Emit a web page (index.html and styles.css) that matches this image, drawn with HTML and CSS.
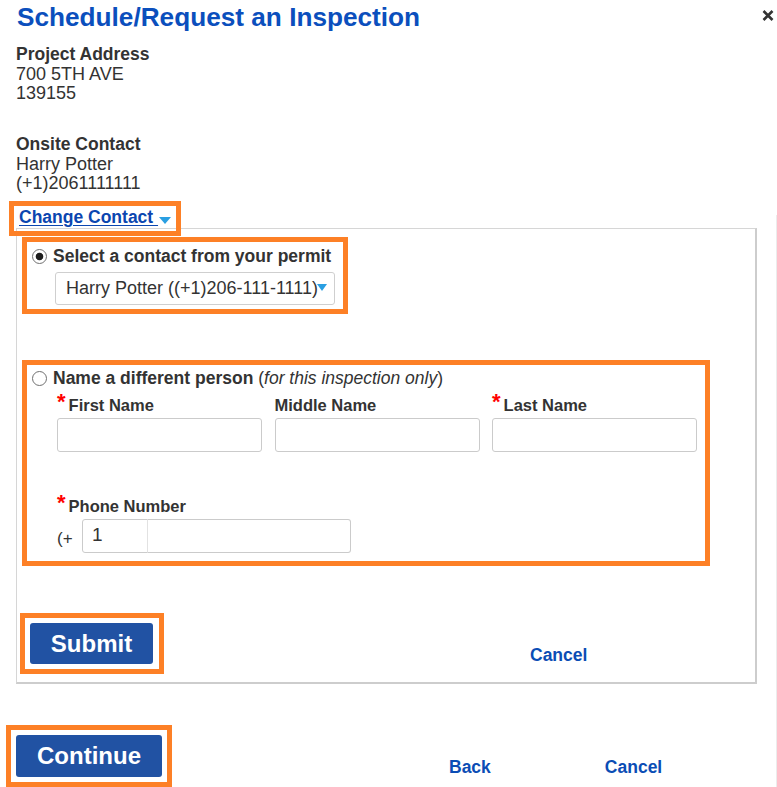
FILE: index.html
```html
<!DOCTYPE html>
<html lang="en">
<head>
<meta charset="utf-8">
<title>Schedule/Request an Inspection</title>
<link rel="stylesheet" href="styles.css">
</head>
<body>
<div class="dialog">
  <button class="close" type="button" aria-label="Close">
    <svg width="12" height="11" viewBox="0 0 12 11"><path d="M1.5 1 L10.5 10 M10.5 1 L1.5 10" stroke="#333" stroke-width="2.6" stroke-linecap="butt" fill="none"/></svg>
  </button>
  <h1 class="title">Schedule/Request an Inspection</h1>

  <div class="info">
    <div class="info-label">Project Address</div>
    <div>700 5TH AVE</div>
    <div>139155</div>
  </div>

  <div class="info onsite">
    <div class="info-label">Onsite Contact</div>
    <div>Harry Potter</div>
    <div>(+1)2061111111</div>
  </div>

  <div class="hl change-box">
    <a class="change-link" href="#">Change Contact&nbsp;</a><span class="tri"></span>
  </div>

  <div class="panel">
    <div class="hl opt1">
      <label class="radio-row">
        <input type="radio" name="contact" class="radio" checked>
        <span class="opt-text">Select a contact from your permit</span>
      </label>
      <div class="select">
        <span class="select-text">Harry Potter ((+1)206-111-1111)</span>
        <span class="select-tri"></span>
      </div>
    </div>

    <div class="hl opt2">
      <label class="radio-row">
        <input type="radio" name="contact" class="radio">
        <span class="opt-text">Name a different person</span><span class="opt-note">&nbsp;(<em>for this inspection only</em>)</span>
      </label>
      <div class="name-grid">
        <div class="field">
          <div class="field-label"><span class="req">*</span>First Name</div>
          <div class="input"></div>
        </div>
        <div class="field">
          <div class="field-label">Middle Name</div>
          <div class="input"></div>
        </div>
        <div class="field">
          <div class="field-label"><span class="req">*</span>Last Name</div>
          <div class="input"></div>
        </div>
      </div>
      <div class="phone">
        <div class="field-label"><span class="req">*</span>Phone Number</div>
        <div class="phone-row">
          <span class="plus">(+</span>
          <div class="input code">1</div>
          <div class="input number"></div>
        </div>
      </div>
    </div>

    <div class="actions">
      <div class="hl submit-box"><button class="btn submit" type="button">Submit</button></div>
      <a class="link panel-cancel" href="#">Cancel</a>
    </div>
  </div>

  <div class="footer">
    <div class="hl cont-box"><button class="btn cont" type="button">Continue</button></div>
    <a class="link back" href="#">Back</a>
    <a class="link foot-cancel" href="#">Cancel</a>
  </div>
</div>
</body>
</html>
```

FILE: styles.css
```css
html, body {
  margin: 0;
  padding: 0;
  background: #fff;
  overflow: hidden;
}

body {
  font-family: "Liberation Sans", Arial, sans-serif;
  color: #333;
  font-size: 18px;
}

.dialog {
  position: relative;
  width: 777px;
  height: 787px;
  padding-top: 2px;
  box-sizing: border-box;
}

.dialog::after {
  content: "";
  position: absolute;
  left: 776px;
  top: 215px;
  bottom: 0;
  width: 1px;
  background: #ececec;
}

.close {
  position: absolute;
  left: 762px;
  top: 10px;
  width: 12px;
  height: 11px;
  padding: 0;
  margin: 0;
  border: 0;
  background: none;
  line-height: 0;
}

.title {
  margin: 0 0 0 17px;
  font-size: 26.2px;
  line-height: 30px;
  font-weight: bold;
  color: #0b4fbd;
}

.info {
  margin: 13px 0 0 16px;
  line-height: 19.5px;
}

.info.onsite {
  margin-top: 31.75px;
}

.info-label {
  font-weight: bold;
  font-size: 17.5px;
}

.hl {
  border: 5px solid #fd8026;
  box-sizing: border-box;
}

.change-box {
  position: relative;
  z-index: 1;
  width: 172px;
  height: 35px;
  margin: 7.25px 0 0 9px;
  padding: 0 0 0 5px;
  line-height: 23px;
  font-size: 17.5px;
  background: transparent;
}

.change-link {
  color: #0b46b0;
  font-weight: bold;
  text-decoration: underline;
  text-underline-offset: 2px;
}

.tri {
  display: inline-block;
  width: 0;
  height: 0;
  margin-left: 1px;
  border-left: 6px solid transparent;
  border-right: 6px solid transparent;
  border-top: 7px solid #2a9fe2;
  vertical-align: -1px;
}

.panel {
  width: 741px;
  box-sizing: border-box;
  margin: -8px 0 0 16px;
  border-top: 1px solid #d6d6d6;
  border-left: 1px solid #d6d6d6;
  border-right: 2px solid #cdcdcd;
  border-bottom: 2px solid #cdcdcd;
  padding: 8px 0 8px 0;
}

.opt1 {
  width: 326px;
  height: 77px;
  margin-left: 5px;
  padding: 4px 0 0 0;
}

.radio-row {
  display: flex;
  align-items: center;
  height: 20px;
  line-height: 20px;
  font-size: 17.5px;
}

.radio {
  appearance: none;
  -webkit-appearance: none;
  width: 15px;
  height: 15px;
  margin: 0 6px 0 5px;
  border: 1px solid #707070;
  border-radius: 50%;
  box-sizing: border-box;
  background: #fff;
  flex: none;
}

.radio:checked {
  background: radial-gradient(circle at center, #1e1e1e 0, #1e1e1e 3.4px, #fff 4.2px);
}

.opt-text {
  font-weight: bold;
}

.opt-note em {
  font-style: italic;
}

.select {
  position: relative;
  width: 280px;
  height: 33px;
  margin: 6px 0 0 28px;
  border: 1px solid #cfcfcf;
  border-radius: 3px;
  box-sizing: border-box;
  padding-left: 10px;
  line-height: 31px;
  font-size: 18px;
  overflow: hidden;
  white-space: nowrap;
}

.select-tri {
  position: absolute;
  left: 261px;
  top: 11px;
  width: 0;
  height: 0;
  border-left: 5px solid transparent;
  border-right: 5px solid transparent;
  border-top: 7px solid #2a9fe2;
}

.opt2 {
  width: 688px;
  height: 206px;
  margin: 46px 0 0 5px;
  padding: 3px 0 0 0;
}

.name-grid {
  display: grid;
  grid-template-columns: repeat(3, 205px);
  column-gap: 12.5px;
  margin: 7px 0 0 30px;
}

.field-label {
  font-size: 16.5px;
  font-weight: bold;
  line-height: 20px;
  height: 20px;
  white-space: nowrap;
}

.req {
  display: inline-block;
  color: #f00;
  font-size: 22px;
  font-weight: bold;
  line-height: 14px;
  vertical-align: top;
  margin-right: 3px;
}

.input {
  height: 34px;
  margin-top: 3px;
  border: 1px solid #cbcbcb;
  border-radius: 3px;
  box-sizing: border-box;
  background: #fff;
}

.phone {
  margin: 44px 0 0 30px;
}

.phone-row {
  display: flex;
  align-items: flex-start;
  margin-top: 3px;
}

.plus {
  width: 25px;
  font-size: 17px;
  line-height: 34px;
  padding-top: 3px;
}

.phone-row .input {
  margin-top: 0;
}

.code {
  width: 66px;
  border-radius: 3px 0 0 3px;
  padding-left: 9px;
  line-height: 30px;
  font-size: 19px;
}

.number {
  width: 204px;
  border-left: 1px solid #e2e2e2;
  border-radius: 0 3px 3px 0;
}

.code + .number {
  margin-left: -1px;
}

.actions {
  display: flex;
  align-items: flex-start;
  margin: 47px 0 0 3px;
}

.submit-box {
  width: 144px;
  height: 61px;
  padding: 5px 6px 5px 5px;
}

.btn {
  display: block;
  margin: 0;
  border: 0;
  border-radius: 3px;
  background: #2152a3;
  color: #fff;
  font-family: "Liberation Sans", Arial, sans-serif;
  font-weight: bold;
  font-size: 24px;
  padding: 0;
}

.submit {
  width: 123px;
  height: 41px;
}

.link {
  color: #0b4db5;
  font-weight: bold;
  font-size: 17.5px;
  text-decoration: none;
  line-height: 20px;
}

.panel-cancel {
  margin: 32px 0 0 366px;
}

.footer {
  display: flex;
  align-items: flex-start;
  margin: 41px 0 0 6px;
}

.cont-box {
  width: 166px;
  height: 62px;
  padding: 5px;
}

.cont {
  width: 146px;
  height: 42px;
}

.back {
  margin: 32px 0 0 277px;
}

.foot-cancel {
  margin: 32px 0 0 114px;
}
```
